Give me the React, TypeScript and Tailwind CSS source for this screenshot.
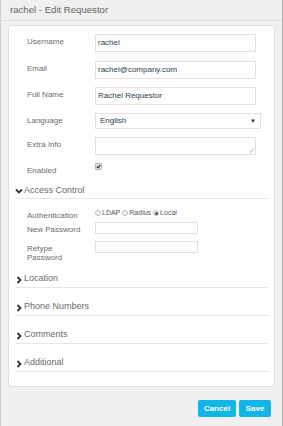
import React from 'react';

const font = { fontFamily: '"Liberation Sans", Arial, sans-serif' };

function Chevron({ down }: { down?: boolean }) {
  return (
    <svg width="8" height="8" viewBox="0 0 8 8" className="shrink-0">
      {down ? (
        <polyline points="1,2.5 4,5.5 7,2.5" fill="none" stroke="#333" strokeWidth="1.8" />
      ) : (
        <polyline points="2.5,1 5.5,4 2.5,7" fill="none" stroke="#333" strokeWidth="1.8" />
      )}
    </svg>
  );
}

function Field({ label, children, className = 'mb-[9px]' }: { label: React.ReactNode; children: React.ReactNode; className?: string }) {
  return (
    <div className={`flex items-start ${className}`}>
      <div className="w-[68px] shrink-0 pt-[3px] text-[8px] leading-[9px] text-[#6b6b6b]">{label}</div>
      {children}
    </div>
  );
}

function Section({ title }: { title: string }) {
  return (
    <div className="flex gap-[1px] border-b border-[#e6e6e6] pb-[3px] h-[28px] items-end">
      <Chevron />
      <span className="text-[9px] leading-[11px] text-[#6b6b6b]">{title}</span>
    </div>
  );
}

function Radio({ checked, label }: { checked?: boolean; label: string }) {
  return (
    <span className="flex items-center gap-[1px]">
      <span className="w-[6px] h-[6px] rounded-full border border-[#bbb] bg-[#f4f4f4] flex items-center justify-center">
        {checked && <span className="w-[3px] h-[3px] rounded-full bg-[#555]" />}
      </span>
      <span className="text-[7px] text-[#555]">{label}</span>
    </span>
  );
}

export default function App() {
  const input = 'w-[161px] h-[18px] border border-[#e0e0e0] bg-white px-[2px] text-[8px] text-[#2c3e50] flex items-center';
  return (
    <div style={font} className="w-[283px] h-[426px] bg-[#f0f0f0] border-l border-l-[#c4d2dc] border-r border-r-[#a9a9a9] flex flex-col">
      <div className="h-[21px] border-b border-[#dcdcdc] px-[9px] flex items-center text-[9.6px] text-[#666]">
        rachel - Edit Requestor
      </div>
      <div className="mx-[7px] mt-[4px] h-[362px] bg-white border border-[#dedede] rounded-[3px] px-[6px] pt-[8px]">
        <div className="pl-[12px]">
          <Field label="Username">
            <div className={input}>rachel</div>
          </Field>
          <Field label="Email" className="mb-[8px]">
            <div className={input}>rachel@company.com</div>
          </Field>
          <Field label="Full Name" className="mb-[8px]">
            <div className={input}>Rachel Requestor</div>
          </Field>
          <Field label="Language" className="mb-[8px]">
            <div className="w-[166px] h-[16px] border border-[#e0e0e0] bg-white pl-[4px] pr-[4px] flex items-center justify-between text-[8px] text-[#2c3e50]">
              <span>English</span>
              <span className="text-[6px] text-[#333]">▼</span>
            </div>
          </Field>
          <Field label="Extra Info" className="mb-[8px]">
            <div className="w-[161px] h-[18px] border border-[#e0e0e0] bg-white relative">
              <svg width="5" height="5" viewBox="0 0 5 5" className="absolute right-[1px] bottom-[1px]">
                <line x1="0.5" y1="4.5" x2="4.5" y2="0.5" stroke="#999" strokeWidth="0.7" />
                <line x1="2.5" y1="4.5" x2="4.5" y2="2.5" stroke="#999" strokeWidth="0.7" />
              </svg>
            </div>
          </Field>
          <div className="flex items-start mb-[3px]">
            <div className="w-[68px] shrink-0 pt-[3px] text-[8px] leading-[9px] text-[#6b6b6b]">Enabled</div>
            <div className="w-[7px] h-[7px] rounded-[1px] bg-[#dcdcdc] border border-[#b5b5b5] flex items-center justify-center">
              <svg width="5" height="5" viewBox="0 0 5 5">
                <polyline points="0.8,2.6 2,3.8 4.3,1" fill="none" stroke="#222" strokeWidth="1.1" />
              </svg>
            </div>
          </div>
        </div>

        <div className="flex items-center gap-[1px] border-b border-[#e6e6e6] pb-[2px] mt-[10px]">
          <Chevron down />
          <span className="text-[9px] leading-[11px] text-[#6b6b6b]">Access Control</span>
        </div>

        <div className="pl-[12px] pt-[9px]">
          <div className="flex items-start mb-[2px]">
            <div className="w-[68px] shrink-0 pt-[3px] text-[8px] leading-[9px] text-[#6b6b6b]">Authentication</div>
            <div className="flex items-center gap-[2px]">
              <Radio label="LDAP" />
              <Radio label="Radius" />
              <Radio checked label="Local" />
            </div>
          </div>
          <Field label="New Password" className="mb-[7px]">
            <div className="w-[103px] h-[12px] border border-[#e0e0e0] bg-white" />
          </Field>
          <Field label={<>Retype<br />Password</>} className="mb-[0px]">
            <div className="w-[103px] h-[12px] border border-[#e0e0e0] bg-white" />
          </Field>
        </div>

        <div className="-mt-[2px]">
          <Section title="Location" />
          <Section title="Phone Numbers" />
          <Section title="Comments" />
          <Section title="Additional" />
        </div>
      </div>
      <div className="flex justify-end gap-[3px] pr-[11px] mt-[13px]">
        <button className="w-[38px] h-[17px] rounded-[2px] bg-[#11b5e8] text-white text-[8px] font-bold">Cancel</button>
        <button className="w-[32px] h-[17px] rounded-[2px] bg-[#11b5e8] text-white text-[8px] font-bold">Save</button>
      </div>
    </div>
  );
}
